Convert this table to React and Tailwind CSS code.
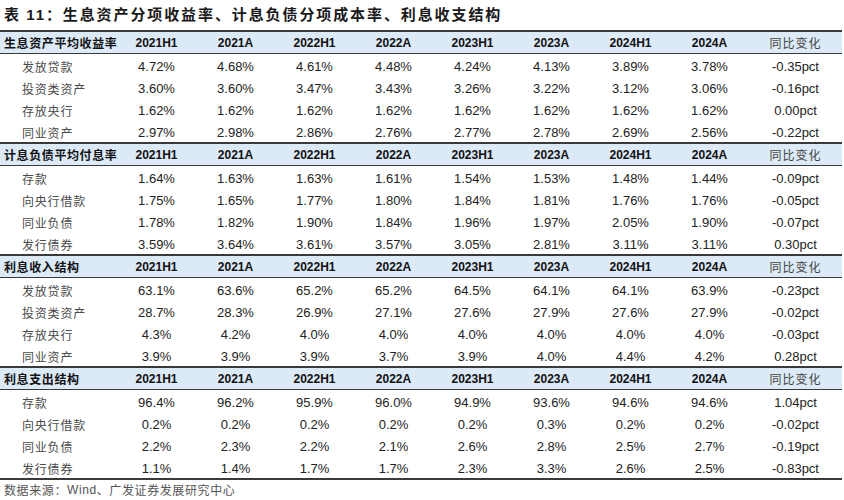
import React from "react";

const cols = ["2021H1", "2021A", "2022H1", "2022A", "2023H1", "2023A", "2024H1", "2024A"];

const blocks = [
  {
    title: "生息资产平均收益率",
    rows: [
      ["发放贷款", "4.72%", "4.68%", "4.61%", "4.48%", "4.24%", "4.13%", "3.89%", "3.78%", "-0.35pct"],
      ["投资类资产", "3.60%", "3.60%", "3.47%", "3.43%", "3.26%", "3.22%", "3.12%", "3.06%", "-0.16pct"],
      ["存放央行", "1.62%", "1.62%", "1.62%", "1.62%", "1.62%", "1.62%", "1.62%", "1.62%", "0.00pct"],
      ["同业资产", "2.97%", "2.98%", "2.86%", "2.76%", "2.77%", "2.78%", "2.69%", "2.56%", "-0.22pct"],
    ],
  },
  {
    title: "计息负债平均付息率",
    rows: [
      ["存款", "1.64%", "1.63%", "1.63%", "1.61%", "1.54%", "1.53%", "1.48%", "1.44%", "-0.09pct"],
      ["向央行借款", "1.75%", "1.65%", "1.77%", "1.80%", "1.84%", "1.81%", "1.76%", "1.76%", "-0.05pct"],
      ["同业负债", "1.78%", "1.82%", "1.90%", "1.84%", "1.96%", "1.97%", "2.05%", "1.90%", "-0.07pct"],
      ["发行债券", "3.59%", "3.64%", "3.61%", "3.57%", "3.05%", "2.81%", "3.11%", "3.11%", "0.30pct"],
    ],
  },
  {
    title: "利息收入结构",
    rows: [
      ["发放贷款", "63.1%", "63.6%", "65.2%", "65.2%", "64.5%", "64.1%", "64.1%", "63.9%", "-0.23pct"],
      ["投资类资产", "28.7%", "28.3%", "26.9%", "27.1%", "27.6%", "27.9%", "27.6%", "27.9%", "-0.02pct"],
      ["存放央行", "4.3%", "4.2%", "4.0%", "4.0%", "4.0%", "4.0%", "4.0%", "4.0%", "-0.03pct"],
      ["同业资产", "3.9%", "3.9%", "3.9%", "3.7%", "3.9%", "4.0%", "4.4%", "4.2%", "0.28pct"],
    ],
  },
  {
    title: "利息支出结构",
    rows: [
      ["存款", "96.4%", "96.2%", "95.9%", "96.0%", "94.9%", "93.6%", "94.6%", "94.6%", "1.04pct"],
      ["向央行借款", "0.2%", "0.2%", "0.2%", "0.2%", "0.2%", "0.3%", "0.2%", "0.2%", "-0.02pct"],
      ["同业负债", "2.2%", "2.3%", "2.2%", "2.1%", "2.6%", "2.8%", "2.5%", "2.7%", "-0.19pct"],
      ["发行债券", "1.1%", "1.4%", "1.7%", "1.7%", "2.3%", "3.3%", "2.6%", "2.5%", "-0.83pct"],
    ],
  },
];

const cjk = "font-['Noto_Sans_CJK_SC',sans-serif]";
const num = "font-['Liberation_Sans','Noto_Sans_CJK_SC',sans-serif]";
const grid = "grid grid-cols-[117px_repeat(8,79px)_93px]";

function Block({ b }) {
  return (
    <div>
      <div className={`${grid} h-[24px] border-t-2 border-b border-[#3a3a3a] bg-[#dce9f7] items-center`}>
        <div className={`${cjk} pl-[4px] text-[12px] font-bold tracking-[0.6px] text-[#111] whitespace-nowrap`}>{b.title}</div>
        {cols.map((c) => (
          <div key={c} className={`${num} text-center text-[12px] font-bold text-[#111]`}>{c}</div>
        ))}
        <div className={`${cjk} text-center text-[12px] tracking-[1px] text-[#444]`}>同比变化</div>
      </div>
      {b.rows.map((r, i) => (
        <div key={i} className={`${grid} h-[22px] pt-[3px] items-center`}>
          <div className={`${cjk} pl-[22px] text-[12px] tracking-[0.8px] text-[#4a4a4a] whitespace-nowrap`}>{r[0]}</div>
          {r.slice(1).map((v, j) => (
            <div key={j} className={`${num} text-center text-[13px] text-[#222]`}>{v}</div>
          ))}
        </div>
      ))}
    </div>
  );
}

export default function App() {
  return (
    <div className="w-[844px] h-[500px] bg-white overflow-hidden">
      <div className="h-[30px] flex items-center pl-[4px]">
        <span className={`${cjk} text-[15px] font-bold tracking-[1.9px] text-[#1a1a1a] whitespace-nowrap`}>
          表 <span className={num}>11</span>：生息资产分项收益率、计息负债分项成本率、利息收支结构
        </span>
      </div>
      <div className="w-[842px] border-b-2 border-[#3a3a3a]">
        {blocks.map((b) => (
          <Block key={b.title} b={b} />
        ))}
      </div>
      <div className={`${cjk} h-[20px] flex items-center pl-[4px] text-[12px] tracking-[0.6px] text-[#555] whitespace-nowrap`}>
        数据来源：<span className={num}>Wind</span>、广发证券发展研究中心
      </div>
    </div>
  );
}
